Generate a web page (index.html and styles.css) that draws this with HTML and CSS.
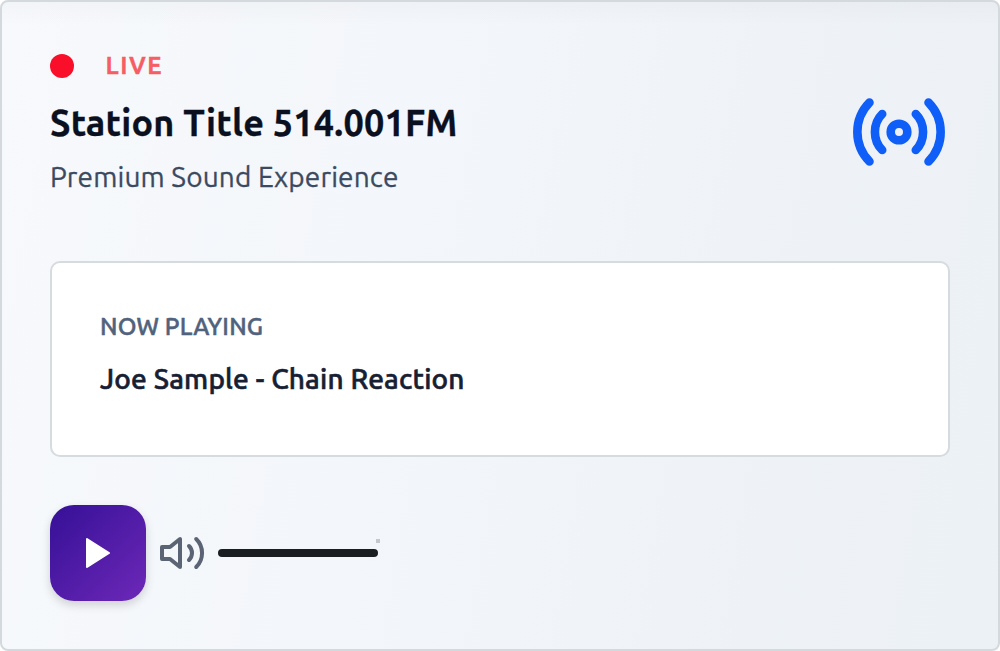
FILE: index.html
```html
<!DOCTYPE html>
<html lang="en">
<head>
<meta charset="utf-8">
<title>Radio player</title>
<link rel="stylesheet" href="styles.css">
</head>
<body>
<main class="player">
  <header class="header">
    <div class="station">
      <div class="live"><span class="dot"></span><span class="live-label">LIVE</span></div>
      <h1 class="title">Station Title 514.001FM</h1>
      <p class="tagline">Premium Sound Experience</p>
    </div>
    <svg class="signal" viewBox="0 0 92 68" fill="none" stroke="currentColor" stroke-width="8.6" stroke-linecap="round">
      <circle cx="46" cy="34" r="8.3"/>
      <path d="M29.200 16C19.500 25.500 19.500 42.500 29.200 52M16.500 4.500C.3 21 .3 47 16.500 63.500M62.800 16C72.500 25.500 72.500 42.500 62.800 52M75.500 4.500C91.700 21 91.700 47 75.500 63.500"/>
    </svg>
  </header>
  <section class="now">
    <div class="now-label">NOW PLAYING</div>
    <div class="track">Joe Sample - Chain Reaction</div>
  </section>
  <div class="controls">
    <button class="play" aria-label="Play">
      <svg class="play-icon" viewBox="0 0 24 30"><path d="M1 1L23 15L1 29Z" fill="currentColor" stroke="currentColor" stroke-width="2" stroke-linejoin="round"/></svg>
    </button>
    <svg class="volume" viewBox="0 0 46 36" fill="none" stroke="currentColor" stroke-width="4" stroke-linecap="round" stroke-linejoin="round">
      <path d="M2 12H10L20 4V32L10 24H2Z"/>
      <path d="M29 11C33 15 33 21 29 25M36.200 4C44 11.500 44 24.500 36.200 32"/>
    </svg>
    <div class="slider"><span class="thumb"></span></div>
  </div>
</main>
</body>
</html>
```
FILE: styles.css
```css
* { box-sizing: border-box; }
body {
  margin: 0;
  background: #fff;
  font-family: Ubuntu, "Noto Sans", sans-serif;
}
.player {
  width: 1000px;
  height: 651px;
  padding: 48px;
  border: 2px solid #d4d9dd;
  border-radius: 8px;
  background:
    linear-gradient(180deg, rgba(0, 0, 0, .018), transparent 24px),
    linear-gradient(100deg, #f7f9fc 0%, #f3f6fa 40%, #eef2f7 78%, #ecf1f5 100%);
}
.header {
  display: flex;
  justify-content: space-between;
  height: 211px;
}
.live {
  display: flex;
  align-items: center;
  gap: 31.5px;
  height: 32px;
}
.dot {
  width: 24px;
  height: 24px;
  border-radius: 50%;
  background: #f90f2a;
}
.live-label {
  padding-bottom: 1px;
  color: #f65d64;
  font-size: 24px;
  line-height: 31px;
  font-weight: 600;
  letter-spacing: 1.5px;
  -webkit-text-stroke: .3px;
}
.title {
  margin: 17px 0 0;
  color: #0b1020;
  font-size: 36px;
  line-height: 48px;
  font-weight: 700;
  letter-spacing: .2px;
  white-space: nowrap;
  -webkit-text-stroke: .3px;
}
.tagline {
  margin: 10px 0 0;
  color: #3b4a61;
  font-size: 28px;
  line-height: 40px;
  letter-spacing: .13px;
  white-space: nowrap;
  -webkit-text-stroke: .3px;
}
.signal {
  width: 92px;
  height: 68px;
  margin: 48px 5px 0 0;
  color: #105ef8;
}
.now {
  height: 196px;
  padding: 48px;
  border: 2px solid #d5dbdf;
  border-radius: 10px;
  background: #fff;
}
.now-label {
  color: #51627c;
  font-size: 24px;
  line-height: 32px;
  font-weight: 500;
  letter-spacing: .18px;
  -webkit-text-stroke: .5px;
}
.track {
  margin-top: 16px;
  color: #172033;
  font-size: 28px;
  line-height: 40px;
  font-weight: 500;
  letter-spacing: .17px;
  white-space: nowrap;
  -webkit-text-stroke: .6px;
}
.controls {
  display: flex;
  align-items: center;
  margin-top: 48px;
}
.play {
  display: flex;
  width: 96px;
  height: 96px;
  padding: 0 0 0 36px;
  align-items: center;
  border: 0;
  border-radius: 24px;
  background: linear-gradient(135deg, #351096, #6d28b8);
  box-shadow: 0 4px 10px rgba(0, 0, 0, .16);
  color: #fff;
}
.play-icon { width: 24px; height: 30px; }
.volume {
  width: 46px;
  height: 36px;
  margin-left: 14px;
  color: #5b6475;
}
.slider {
  position: relative;
  width: 160px;
  height: 8px;
  margin-left: 12px;
  border-radius: 4px;
  background: #1a1e20;
}
.thumb {
  position: absolute;
  top: -10px;
  right: -2px;
  width: 4px;
  height: 4px;
  background: #c4c8cb;
}
```
